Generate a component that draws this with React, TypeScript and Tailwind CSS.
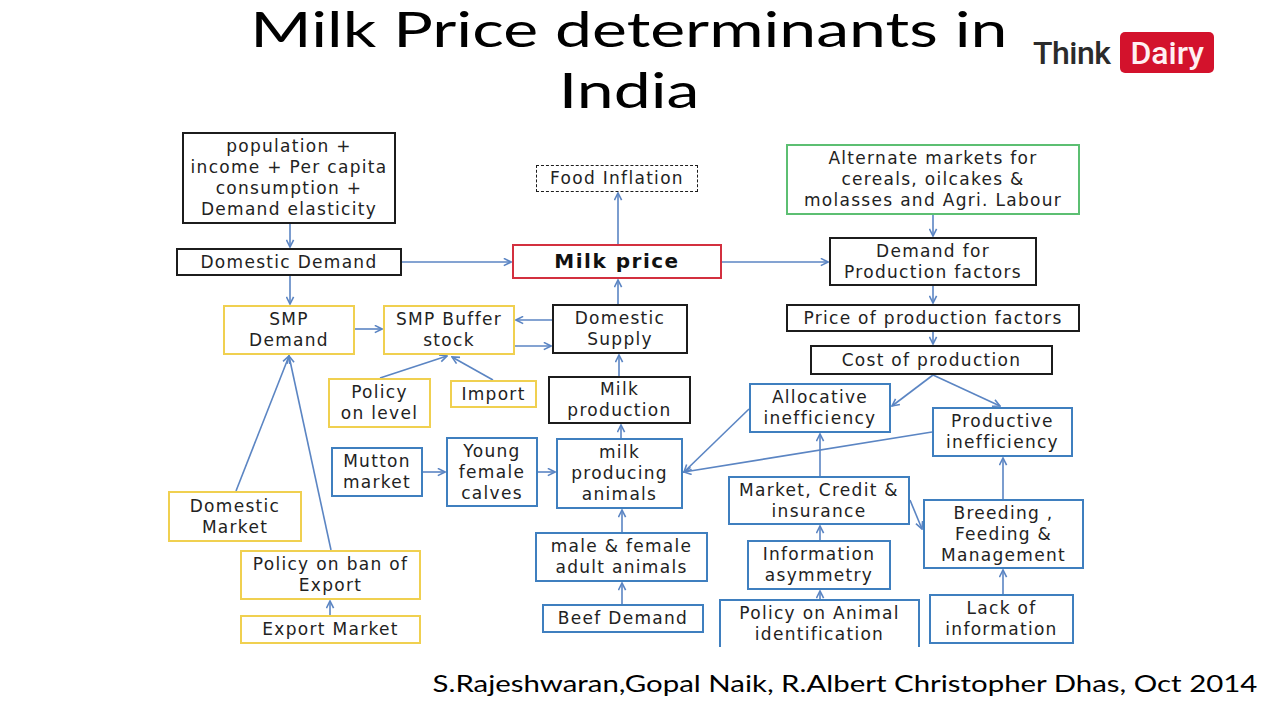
import React from "react";

const base =
  "absolute flex flex-col items-center justify-center text-center whitespace-nowrap bg-white";

function Box({ className, children }: { className: string; children: React.ReactNode }) {
  return <div className={`${base} ${className}`}>{children}</div>;
}

const K = "border-2 border-[#1c1c1c]";
const Y = "border-2 border-[#f0d050]";
const B = "border-2 border-[#3f7fbf]";

export default function App() {
  const c = "#5b85c3";
  const lines: string[] = [
    "M290,224 L290,247",
    "M402,262 L511,262",
    "M290,276 L290,304",
    "M618,244 L618,193",
    "M722,262 L828,262",
    "M933,215 L933,236",
    "M933,286 L933,303",
    "M933,332 L933,344",
    "M933,375 L892,406",
    "M933,375 L1000,406",
    "M618,304 L618,280",
    "M552,320 L516,320",
    "M515,346 L551,346",
    "M355,329 L382,329",
    "M619,376 L619,355",
    "M380,378 L447,356",
    "M493,380 L452,357",
    "M621,438 L621,425",
    "M423,472 L445,472",
    "M538,472 L555,472",
    "M749,409 L684,472",
    "M932,432 L684,472",
    "M820,476 L820,434",
    "M910,500 L922,529",
    "M820,540 L820,526",
    "M820,599 L820,591",
    "M1003,499 L1003,458",
    "M1003,594 L1003,570",
    "M622,532 L622,510",
    "M622,604 L622,583",
    "M236,491 L289,356",
    "M331,550 L289,356",
    "M330,615 L330,601",
  ];
  return (
    <div className="w-[1280px] h-[720px] bg-white overflow-hidden flex flex-col">
      {/* header */}
      <div className="h-[128px] flex flex-row pl-[240px] shrink-0">
        <div className="w-[778px] text-center font-['Lato'] text-[48px] text-black">
          <div className="leading-[58px]">
            <span className="inline-block origin-center scale-x-[1.377]">Milk Price determinants in</span>
          </div>
          <div className="leading-[63px]">
            <span className="inline-block origin-center scale-x-[1.377]">India</span>
          </div>
        </div>
        <div className="ml-[15px] mt-[32px] flex flex-row items-center h-[41px]">
          <span className="font-['Roboto'] font-medium text-[32px] leading-none text-[#2b2b2b] tracking-[-0.5px]">
            Think
          </span>
          <span className="ml-[10px] h-[41px] px-[10px] rounded-[5px] bg-[#d3122c] flex items-center font-['Roboto'] font-medium text-[32px] leading-none text-[#fff0f2]">
            Dairy
          </span>
        </div>
      </div>

      {/* diagram canvas */}
      <div className="relative h-[530px] shrink-0 font-['DejaVu_Sans'] text-[17px] leading-[21px] tracking-[1.3px] text-[#222]">
        <svg
          className="absolute inset-0 pointer-events-none"
          width="1280"
          height="530"
          viewBox="0 128 1280 530"
        >
          <defs>
            <marker
              id="ah"
              viewBox="0 0 10 10"
              refX="9"
              refY="5"
              markerWidth="9"
              markerHeight="9"
              markerUnits="userSpaceOnUse"
              orient="auto"
            >
              <path d="M1,1 L9,5 L1,9" fill="none" stroke={c} strokeWidth="1.8" />
            </marker>
          </defs>
          {lines.map((d, i) => (
            <path key={i} d={d} stroke={c} strokeWidth="1.6" fill="none" markerEnd="url(#ah)" />
          ))}
        </svg>

        <Box className={`${K} left-[182px] top-[4px] w-[214px] h-[92px]`}>
          <span>population +</span>
          <span>income + Per capita</span>
          <span>consumption +</span>
          <span>Demand elasticity</span>
        </Box>
        <Box className={`${K} left-[176px] top-[120px] w-[226px] h-[28px]`}>
          <span>Domestic Demand</span>
        </Box>
        <Box className="border-[1.5px] border-dashed border-[#1c1c1c] left-[536px] top-[37px] w-[162px] h-[27px]">
          <span>Food Inflation</span>
        </Box>
        <Box className="border-2 border-[#d3303f] left-[512px] top-[116px] w-[210px] h-[35px]">
          <span className="font-bold text-[20px] tracking-[1.5px] text-[#111]">Milk price</span>
        </Box>
        <Box className="border-2 border-[#5cbf72] left-[786px] top-[16px] w-[294px] h-[71px]">
          <span>Alternate markets for</span>
          <span>cereals, oilcakes &amp;</span>
          <span>molasses and Agri. Labour</span>
        </Box>
        <Box className={`${K} left-[829px] top-[109px] w-[208px] h-[49px]`}>
          <span>Demand for</span>
          <span>Production factors</span>
        </Box>
        <Box className={`${K} left-[786px] top-[176px] w-[294px] h-[28px]`}>
          <span>Price of production factors</span>
        </Box>
        <Box className={`${K} left-[810px] top-[217px] w-[243px] h-[30px]`}>
          <span>Cost of production</span>
        </Box>
        <Box className={`${Y} left-[223px] top-[177px] w-[132px] h-[50px]`}>
          <span>SMP</span>
          <span>Demand</span>
        </Box>
        <Box className={`${Y} left-[383px] top-[177px] w-[132px] h-[50px]`}>
          <span>SMP Buffer</span>
          <span>stock</span>
        </Box>
        <Box className={`${K} left-[552px] top-[176px] w-[136px] h-[50px]`}>
          <span>Domestic</span>
          <span>Supply</span>
        </Box>
        <Box className={`${Y} left-[328px] top-[250px] w-[103px] h-[50px]`}>
          <span>Policy</span>
          <span>on level</span>
        </Box>
        <Box className={`${Y} left-[450px] top-[252px] w-[87px] h-[28px]`}>
          <span>Import</span>
        </Box>
        <Box className={`${K} left-[548px] top-[248px] w-[143px] h-[48px]`}>
          <span>Milk</span>
          <span>production</span>
        </Box>
        <Box className={`${B} left-[331px] top-[319px] w-[92px] h-[50px]`}>
          <span>Mutton</span>
          <span>market</span>
        </Box>
        <Box className={`${B} left-[446px] top-[309px] w-[92px] h-[70px]`}>
          <span>Young</span>
          <span>female</span>
          <span>calves</span>
        </Box>
        <Box className={`${B} left-[556px] top-[310px] w-[127px] h-[71px]`}>
          <span>milk</span>
          <span>producing</span>
          <span>animals</span>
        </Box>
        <Box className={`${B} left-[749px] top-[255px] w-[142px] h-[50px]`}>
          <span>Allocative</span>
          <span>inefficiency</span>
        </Box>
        <Box className={`${B} left-[932px] top-[279px] w-[141px] h-[50px]`}>
          <span>Productive</span>
          <span>inefficiency</span>
        </Box>
        <Box className={`${Y} left-[168px] top-[363px] w-[134px] h-[51px]`}>
          <span>Domestic</span>
          <span>Market</span>
        </Box>
        <Box className={`${B} left-[728px] top-[348px] w-[182px] h-[49px]`}>
          <span>Market, Credit &amp;</span>
          <span>insurance</span>
        </Box>
        <Box className={`${B} left-[923px] top-[371px] w-[161px] h-[70px]`}>
          <span>Breeding ,</span>
          <span>Feeding &amp;</span>
          <span>Management</span>
        </Box>
        <Box className={`${B} left-[535px] top-[404px] w-[173px] h-[50px]`}>
          <span>male &amp; female</span>
          <span>adult animals</span>
        </Box>
        <Box className={`${B} left-[747px] top-[412px] w-[144px] h-[50px]`}>
          <span>Information</span>
          <span>asymmetry</span>
        </Box>
        <Box className={`${Y} left-[240px] top-[422px] w-[181px] h-[50px]`}>
          <span>Policy on ban of</span>
          <span>Export</span>
        </Box>
        <Box className={`${Y} left-[240px] top-[487px] w-[181px] h-[29px]`}>
          <span>Export Market</span>
        </Box>
        <Box className={`${B} left-[542px] top-[476px] w-[162px] h-[29px]`}>
          <span>Beef Demand</span>
        </Box>
        <Box className={`${B} border-b-0 left-[719px] top-[471px] w-[201px] h-[48px]`}>
          <span>Policy on Animal</span>
          <span>identification</span>
        </Box>
        <Box className={`${B} left-[929px] top-[466px] w-[145px] h-[50px]`}>
          <span>Lack of</span>
          <span>information</span>
        </Box>
      </div>

      {/* footer */}
      <div className="flex flex-row justify-end pr-[23px] pt-[9px]">
        <span className="inline-block origin-right scale-x-[1.225] font-['Lato'] text-[24px] leading-[32px] text-black">
          S.Rajeshwaran,Gopal Naik, R.Albert Christopher Dhas, Oct 2014
        </span>
      </div>
    </div>
  );
}
